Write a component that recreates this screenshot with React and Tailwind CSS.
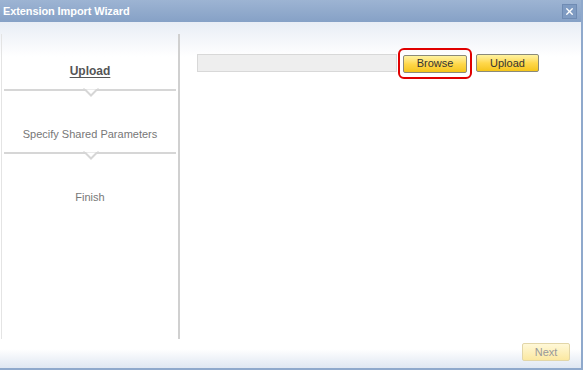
import { X } from 'lucide-react';

function Step({ label, active, first }) {
  return (
    <div className={(first ? 'h-[55px]' : 'h-[61px]') + ' flex items-end justify-center pb-[11px]'}>
      <span
        className={
          active
            ? 'text-[12px] leading-[14px] font-bold text-[#555] underline underline-offset-2'
            : 'text-[11px] leading-[14px] text-[#777]'
        }
      >
        {label}
      </span>
    </div>
  );
}

function Divider() {
  return (
    <div className="relative h-[2px] mx-[2px] bg-[#d6d6d6]">
      <svg className="absolute left-[79px] top-[-1px]" width="16" height="9" viewBox="0 0 16 9">
        <path d="M0 1.5 H2 L8 7.5 L14 1.5 H16" fill="#fff" stroke="#d6d6d6" strokeWidth="2" />
        <rect x="2" y="0" width="12" height="1" fill="#fff" />
      </svg>
    </div>
  );
}

const yellow =
  'h-[18px] text-[11px] text-[#333] rounded-[2px] border border-[#8a8a7a] bg-gradient-to-b from-[#fff3a0] via-[#ffd84a] to-[#f5c516] flex items-center justify-center';

export default function App() {
  return (
    <div className="w-[586px] h-[370px] bg-white font-['Liberation_Sans',Arial,sans-serif] flex flex-col">
      <div className="w-[583px] h-[370px] flex flex-col border-r-[2px] border-b-[2px] border-[#8fa9cc]">
        <div className="h-[22px] shrink-0 flex items-center justify-between pl-[3px] pr-[4px] bg-gradient-to-b from-[#9db4d3] to-[#86a1c6]">
          <span className="text-white font-bold text-[11px] tracking-[-0.1px]">Extension Import Wizard</span>
          <div className="w-[15px] h-[15px] flex items-center justify-center bg-[#7f9bc2] border border-[#6f8bb3]">
            <X className="w-[11px] h-[11px] text-white" strokeWidth={3} />
          </div>
        </div>
        <div className="flex-1 flex flex-col bg-gradient-to-b from-[#e8edf5] via-white via-[10%] to-white">
          <div className="flex-1 flex pt-[12px]">
            <div className="w-[179px] flex flex-col border-r-[2px] border-[#d0d0d0] border-l border-l-[#e4e4e4] ml-[1px] h-[305px]">
              <Step label="Upload" active first />
              <Divider />
              <Step label="Specify Shared Parameters" />
              <Divider />
              <Step label="Finish" />
            </div>
            <div className="flex-1 pl-[17px] pt-[20px]">
              <div className="flex items-center">
                <div className="w-[200px] h-[18px] bg-[#eeeeee] border border-[#d8d8d8]" />
                <div className="ml-[1px] px-[3px] pt-[5px] pb-[4px] rounded-[6px] border-[2px] border-[#e00000] -my-[7px]">
                  <button className={'w-[64px] ' + yellow}>Browse</button>
                </div>
                <button className={'ml-[4px] w-[63px] ' + yellow}>Upload</button>
              </div>
            </div>
          </div>
          <div className="h-[29px] flex items-start justify-end pr-[11px] bg-gradient-to-b from-white via-white via-[35%] to-[#dfe7f2]">
            <button className="mt-[4px] w-[48px] h-[18px] text-[11px] text-[#999] rounded-[2px] border border-[#e2d6a8] bg-gradient-to-b from-[#fff8d8] to-[#fbe8a0] flex items-center justify-center">
              Next
            </button>
          </div>
        </div>
      </div>
    </div>
  );
}
